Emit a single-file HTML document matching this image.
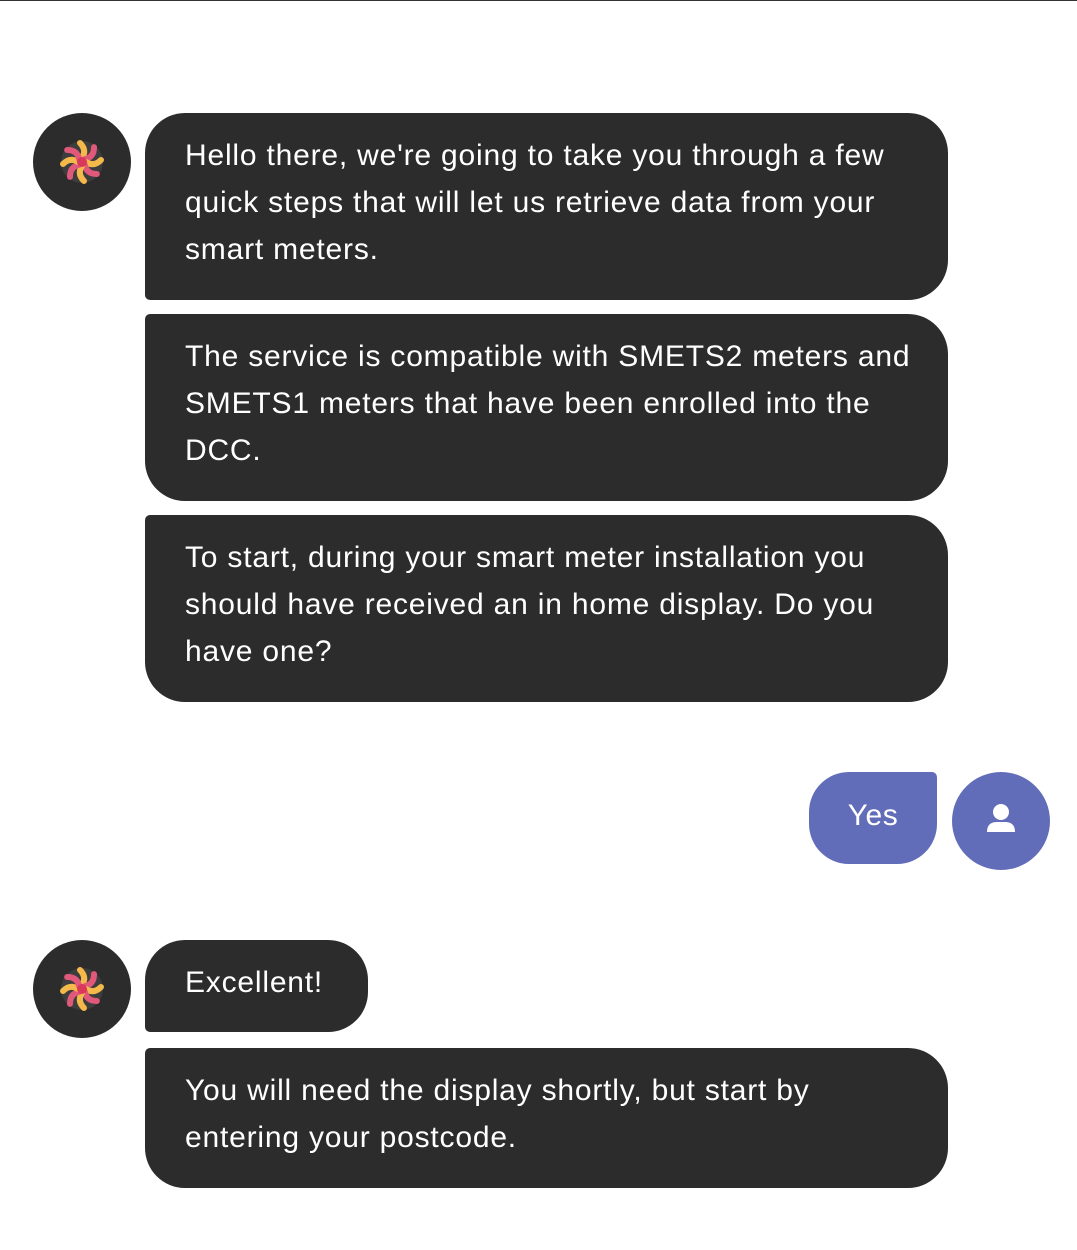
<!DOCTYPE html>
<html><head><style>
body{margin:0;width:1077px;height:1250px;background:#fff;position:relative;overflow:hidden;font-family:"Liberation Sans",sans-serif;}
.top{position:absolute;left:0;top:0;width:1077px;height:1px;background:#333}
.b{position:absolute;left:145px;width:803px;box-sizing:border-box;background:#2c2c2c;color:#fff;font-size:30px;line-height:47px;padding:19px 40px;letter-spacing:0.8px;white-space:nowrap}
.f{border-radius:40px 40px 40px 5px}
.m{border-radius:5px 40px 40px 40px}
.av{position:absolute;left:33px;width:98px;height:98px;border-radius:50%;background:#2c2c2c}
.av svg{position:absolute;left:22px;top:22px}
</style></head><body>
<div class="top"></div>
<div class="av" style="top:113px"><svg width="54" height="54" viewBox="-27 -27 54 54"><circle r="21" fill="#3d3d3d"/><g id="p"><path d="M0 -4 C4 -10 2 -15 -2 -19" stroke="#f4b94a" stroke-width="6" stroke-linecap="round" fill="none"/><path d="M0 -4 C4 -10 2 -15 -2 -19" stroke="#e0587a" stroke-width="6" stroke-linecap="round" fill="none" transform="rotate(45)"/></g><use href="#p" transform="rotate(90)"/><use href="#p" transform="rotate(180)"/><use href="#p" transform="rotate(270)"/><circle r="5" fill="#d9385a"/></svg></div>
<div class="b f" style="top:113px;height:187px">Hello there, we're going to take you through a few<br>quick steps that will let us retrieve data from your<br>smart meters.</div>
<div class="b m" style="top:314px;height:187px">The service is compatible with SMETS2 meters and<br>SMETS1 meters that have been enrolled into the<br>DCC.</div>
<div class="b m" style="top:515px;height:187px">To start, during your smart meter installation you<br>should have received an in home display. Do you<br>have one?</div>
<div style="position:absolute;left:809px;top:772px;width:128px;height:92px;background:#626dba;border-radius:40px 5px 40px 40px;color:#fff;font-size:30px;line-height:88px;text-align:center;letter-spacing:0.5px">Yes</div>
<div style="position:absolute;left:952px;top:772px;width:98px;height:98px;border-radius:50%;background:#626dba"><svg width="98" height="98" viewBox="0 0 98 98"><circle cx="49" cy="40" r="8" fill="#fff"/><path d="M35 60 Q35 50 45 50 L53 50 Q63 50 63 60 Z" fill="#fff"/></svg></div>
<div class="av" style="top:940px"><svg width="54" height="54" viewBox="-27 -27 54 54"><circle r="21" fill="#3d3d3d"/><use href="#p"/><use href="#p" transform="rotate(90)"/><use href="#p" transform="rotate(180)"/><use href="#p" transform="rotate(270)"/><circle r="5" fill="#d9385a"/></svg></div>
<div class="b f" style="top:940px;height:92px;width:223px">Excellent!</div>
<div class="b m" style="top:1048px;height:140px">You will need the display shortly, but start by<br>entering your postcode.</div>
</body></html>
